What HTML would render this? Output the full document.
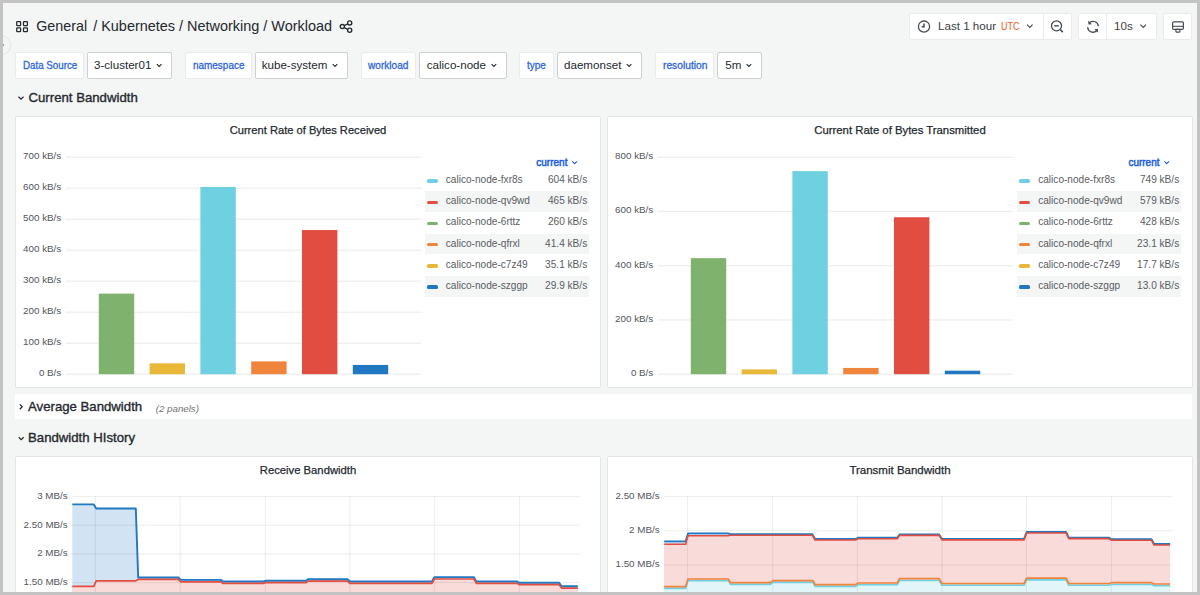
<!DOCTYPE html>
<html><head><meta charset="utf-8"><style>
*{box-sizing:border-box;margin:0;padding:0}
html,body{width:1200px;height:595px;overflow:hidden;background:#f4f5f5}
body{font-family:"Liberation Sans",sans-serif;color:#24292e;position:relative}
.a{position:absolute;white-space:nowrap;line-height:1}
.lbl{color:#2d66e0;-webkit-text-stroke:0.3px #2d66e0}
.val{color:#24292e}
.ptitle{color:#24292e;-webkit-text-stroke:0.25px #24292e}
.rtitle{color:#24292e;-webkit-text-stroke:0.35px #24292e}
.ax{color:#52565c}
.lg{color:#595d63}
svg{position:absolute;overflow:visible}
#frame{position:absolute;left:0;top:0;width:1200px;height:595px;border:3px solid #c3c3c3;z-index:50}
</style></head><body>
<svg style="left:0;top:0" width="1200" height="60" viewBox="0 0 1200 60"><g fill="none" stroke="#24292e" stroke-width="1.25"><rect x="16.7" y="21.6" width="3.9" height="3.9" rx="0.6"/><rect x="23.5" y="21.6" width="3.9" height="3.9" rx="0.6"/><rect x="16.7" y="27.8" width="3.9" height="3.9" rx="0.6"/><rect x="23.5" y="27.8" width="3.9" height="3.9" rx="0.6"/></g><g fill="none" stroke="#24292e" stroke-width="1.3"><circle cx="349.7" cy="22.9" r="2.1"/><circle cx="342.3" cy="26.6" r="2.1"/><circle cx="349.7" cy="30.3" r="2.1"/><line x1="344.2" y1="25.6" x2="347.8" y2="23.9"/><line x1="344.2" y1="27.6" x2="347.8" y2="29.3"/></g></svg>
<div class="a val" style="left:36.25px;top:19.00px;font-size:14.3px;">General</div>
<div class="a val" style="left:93.20px;top:19.00px;font-size:14.45px;">/ Kubernetes / Networking / Workload</div>
<div style="position:absolute;left:909px;top:13px;width:163px;height:27px;background:#fff;border:1px solid #e9ebee;border-radius:2px"></div>
<div style="position:absolute;left:1043px;top:14px;width:1px;height:25px;background:#e9ebee"></div>
<div style="position:absolute;left:1078px;top:13px;width:79px;height:27px;background:#fff;border:1px solid #e9ebee;border-radius:2px"></div>
<div style="position:absolute;left:1106px;top:14px;width:1px;height:25px;background:#e9ebee"></div>
<div style="position:absolute;left:1163px;top:13px;width:29px;height:27px;background:#fff;border:1px solid #e9ebee;border-radius:2px"></div>
<div class="a " style="left:938.00px;top:20.00px;font-size:11.6px;color:#3b4046">Last 1 hour</div>
<div class="a " style="left:1001.00px;top:22.00px;font-size:10px;color:#e8692c;-webkit-text-stroke:0.1px #e8692c;transform:scaleX(0.9);transform-origin:0 0">UTC</div>
<div class="a " style="left:1114.00px;top:20.00px;font-size:11.6px;color:#3b4046">10s</div>
<svg style="left:0;top:0" width="1200" height="60" viewBox="0 0 1200 60"><g fill="none" stroke="#464c54" stroke-width="1.3"><circle cx="924" cy="26.6" r="5.6"/><polyline points="924,23.4 924,26.7 921.7,26.7" stroke-width="1.5"/></g><polyline points="1027.00,24.60 1029.80,27.40 1032.60,24.60" fill="none" stroke="#464c54" stroke-width="1.15"/><g fill="none" stroke="#464c54" stroke-width="1.3"><circle cx="1056.5" cy="25.8" r="5.0"/><line x1="1054.2" y1="25.8" x2="1058.8" y2="25.8" stroke-width="1.4"/><line x1="1060.3" y1="29.6" x2="1062.8" y2="32.1" stroke-width="1.5"/></g><g fill="none" stroke="#464c54" stroke-width="1.3"><path d="M1089.6,22.6 A5.4,5.4 0 0 1 1098.4,26.2"/><path d="M1096.6,30.8 A5.4,5.4 0 0 1 1087.6,27.2"/></g><path d="M1088.2,20.6 L1088.4,24.6 L1091.9,24.2 Z" fill="#464c54"/><path d="M1098,32.8 L1097.8,28.8 L1094.3,29.2 Z" fill="#464c54"/><polyline points="1140.40,24.60 1143.20,27.40 1146.00,24.60" fill="none" stroke="#464c54" stroke-width="1.15"/><g fill="none" stroke="#464c54" stroke-width="1.2"><rect x="1172.6" y="21.8" width="10.8" height="7.6" rx="1.2"/><line x1="1172.6" y1="26.3" x2="1183.4" y2="26.3" stroke-width="1.1"/><rect x="1175.9" y="29.4" width="4.0" height="2.7" rx="0.5"/></g><circle cx="1" cy="45.2" r="9.6" fill="#f4f5f5" stroke="#dcdee0" stroke-width="0.8"/><circle cx="3.4" cy="45.1" r="0.75" fill="#6a6e73"/></svg>
<div style="position:absolute;left:15px;top:52px;width:69px;height:27px;background:#fff;border:1px solid #e9ebee;border-radius:2px"></div>
<div style="position:absolute;left:87px;top:52px;width:85px;height:27px;background:#fff;border:1px solid #cdd0d4;border-radius:2px"></div>
<div class="a lbl" style="left:22.50px;top:61.00px;font-size:10.4px;transform:scaleX(0.938);transform-origin:0 0">Data Source</div>
<div class="a val" style="left:94.00px;top:59.00px;font-size:11.6px;">3-cluster01</div>
<div style="position:absolute;left:185px;top:52px;width:67px;height:27px;background:#fff;border:1px solid #e9ebee;border-radius:2px"></div>
<div style="position:absolute;left:255px;top:52px;width:93px;height:27px;background:#fff;border:1px solid #cdd0d4;border-radius:2px"></div>
<div class="a lbl" style="left:192.70px;top:61.00px;font-size:10.4px;transform:scaleX(0.957);transform-origin:0 0">namespace</div>
<div class="a val" style="left:261.70px;top:59.00px;font-size:11.6px;">kube-system</div>
<div style="position:absolute;left:361px;top:52px;width:55px;height:27px;background:#fff;border:1px solid #e9ebee;border-radius:2px"></div>
<div style="position:absolute;left:419px;top:52px;width:88px;height:27px;background:#fff;border:1px solid #cdd0d4;border-radius:2px"></div>
<div class="a lbl" style="left:368.20px;top:61.00px;font-size:10.4px;transform:scaleX(0.971);transform-origin:0 0">workload</div>
<div class="a val" style="left:426.70px;top:59.00px;font-size:11.6px;">calico-node</div>
<div style="position:absolute;left:519px;top:52px;width:35px;height:27px;background:#fff;border:1px solid #e9ebee;border-radius:2px"></div>
<div style="position:absolute;left:557px;top:52px;width:85px;height:27px;background:#fff;border:1px solid #cdd0d4;border-radius:2px"></div>
<div class="a lbl" style="left:527.20px;top:61.00px;font-size:10.4px;transform:scaleX(0.957);transform-origin:0 0">type</div>
<div class="a val" style="left:564.00px;top:59.00px;font-size:11.6px;">daemonset</div>
<div style="position:absolute;left:655px;top:52px;width:59px;height:27px;background:#fff;border:1px solid #e9ebee;border-radius:2px"></div>
<div style="position:absolute;left:717px;top:52px;width:45px;height:27px;background:#fff;border:1px solid #cdd0d4;border-radius:2px"></div>
<div class="a lbl" style="left:662.50px;top:61.00px;font-size:10.4px;transform:scaleX(0.986);transform-origin:0 0">resolution</div>
<div class="a val" style="left:725.20px;top:59.00px;font-size:11.6px;">5m</div>
<svg style="left:0;top:0" width="1200" height="100" viewBox="0 0 1200 100"><polyline points="156.90,64.05 159.20,66.35 161.50,64.05" fill="none" stroke="#24292e" stroke-width="1.1"/><polyline points="332.70,64.05 335.00,66.35 337.30,64.05" fill="none" stroke="#24292e" stroke-width="1.1"/><polyline points="491.60,64.05 493.90,66.35 496.20,64.05" fill="none" stroke="#24292e" stroke-width="1.1"/><polyline points="626.80,64.05 629.10,66.35 631.40,64.05" fill="none" stroke="#24292e" stroke-width="1.1"/><polyline points="746.60,64.05 748.90,66.35 751.20,64.05" fill="none" stroke="#24292e" stroke-width="1.1"/><polyline points="18.50,96.75 21.00,99.25 23.50,96.75" fill="none" stroke="#24292e" stroke-width="1.2"/></svg>
<div class="a rtitle" style="left:28.50px;top:91.00px;font-size:13.2px;">Current Bandwidth</div>
<div style="position:absolute;left:15px;top:394px;width:1177px;height:25px;background:#fff"></div>
<svg style="left:0;top:380" width="40" height="80" viewBox="0 380 40 80"><polyline points="19.8,404.4 22.2,406.8 19.8,409.2" fill="none" stroke="#24292e" stroke-width="1.25"/><polyline points="18.70,437.25 21.20,439.75 23.70,437.25" fill="none" stroke="#24292e" stroke-width="1.2"/></svg>
<div class="a rtitle" style="left:28.00px;top:400.00px;font-size:13.2px;">Average Bandwidth</div>
<div class="a " style="left:155.80px;top:404.00px;font-size:9.7px;font-style:italic;color:#6e7175">(2 panels)</div>
<div class="a rtitle" style="left:28.00px;top:431.00px;font-size:13.2px;">Bandwidth HIstory</div>
<div style="position:absolute;left:15px;top:116px;width:586px;height:272px;background:#fff;border:1px solid #e3e5e8;border-radius:2px"></div>
<div style="position:absolute;left:607px;top:116px;width:586px;height:272px;background:#fff;border:1px solid #e3e5e8;border-radius:2px"></div>
<div style="position:absolute;left:15px;top:456px;width:586px;height:200px;background:#fff;border:1px solid #e3e5e8;border-radius:2px"></div>
<div style="position:absolute;left:607px;top:456px;width:586px;height:200px;background:#fff;border:1px solid #e3e5e8;border-radius:2px"></div>
<div class="a ptitle" style="left:8.00px;width:600px;text-align:center;top:125.00px;font-size:11.15px;">Current Rate of Bytes Received</div>
<div class="a ptitle" style="left:600.00px;width:600px;text-align:center;top:125.00px;font-size:11.35px;">Current Rate of Bytes Transmitted</div>
<div class="a ptitle" style="left:8.00px;width:600px;text-align:center;top:465.00px;font-size:11.25px;">Receive Bandwidth</div>
<div class="a ptitle" style="left:600.00px;width:600px;text-align:center;top:465.00px;font-size:11.5px;">Transmit Bandwidth</div>
<svg style="left:0;top:0" width="1200" height="400" viewBox="0 0 1200 400"><rect x="66" y="373.60" width="355" height="1.2" fill="#ededed"/><rect x="66" y="342.60" width="355" height="1.2" fill="#ededed"/><rect x="66" y="311.60" width="355" height="1.2" fill="#ededed"/><rect x="66" y="280.60" width="355" height="1.2" fill="#ededed"/><rect x="66" y="249.60" width="355" height="1.2" fill="#ededed"/><rect x="66" y="218.60" width="355" height="1.2" fill="#ededed"/><rect x="66" y="187.60" width="355" height="1.2" fill="#ededed"/><rect x="66" y="156.60" width="355" height="1.2" fill="#ededed"/><rect x="98.80" y="293.60" width="35.4" height="80.60" fill="#7eb26d"/><rect x="149.60" y="363.32" width="35.4" height="10.88" fill="#eab839"/><rect x="200.40" y="186.96" width="35.4" height="187.24" fill="#6ed0e0"/><rect x="251.20" y="361.37" width="35.4" height="12.83" fill="#ef843c"/><rect x="302.00" y="230.05" width="35.4" height="144.15" fill="#e24d42"/><rect x="352.80" y="364.93" width="35.4" height="9.27" fill="#1f78c1"/></svg>
<div class="a ax" style="right:1138.80px;top:368.00px;font-size:9.8px;">0 B/s</div>
<div class="a ax" style="right:1138.80px;top:337.00px;font-size:9.8px;">100 kB/s</div>
<div class="a ax" style="right:1138.80px;top:306.00px;font-size:9.8px;">200 kB/s</div>
<div class="a ax" style="right:1138.80px;top:275.00px;font-size:9.8px;">300 kB/s</div>
<div class="a ax" style="right:1138.80px;top:244.00px;font-size:9.8px;">400 kB/s</div>
<div class="a ax" style="right:1138.80px;top:213.00px;font-size:9.8px;">500 kB/s</div>
<div class="a ax" style="right:1138.80px;top:182.00px;font-size:9.8px;">600 kB/s</div>
<div class="a ax" style="right:1138.80px;top:151.00px;font-size:9.8px;">700 kB/s</div>
<svg style="left:0;top:0" width="1200" height="400" viewBox="0 0 1200 400"><rect x="658" y="373.60" width="355" height="1.2" fill="#ededed"/><rect x="658" y="319.37" width="355" height="1.2" fill="#ededed"/><rect x="658" y="265.15" width="355" height="1.2" fill="#ededed"/><rect x="658" y="210.92" width="355" height="1.2" fill="#ededed"/><rect x="658" y="156.70" width="355" height="1.2" fill="#ededed"/><rect x="690.80" y="258.16" width="35.4" height="116.04" fill="#7eb26d"/><rect x="741.60" y="369.40" width="35.4" height="4.80" fill="#eab839"/><rect x="792.40" y="171.13" width="35.4" height="203.07" fill="#6ed0e0"/><rect x="843.20" y="367.94" width="35.4" height="6.26" fill="#ef843c"/><rect x="894.00" y="217.22" width="35.4" height="156.98" fill="#e24d42"/><rect x="944.80" y="370.68" width="35.4" height="3.52" fill="#1f78c1"/></svg>
<div class="a ax" style="right:546.80px;top:368.00px;font-size:9.8px;">0 B/s</div>
<div class="a ax" style="right:546.80px;top:314.00px;font-size:9.8px;">200 kB/s</div>
<div class="a ax" style="right:546.80px;top:260.00px;font-size:9.8px;">400 kB/s</div>
<div class="a ax" style="right:546.80px;top:205.00px;font-size:9.8px;">600 kB/s</div>
<div class="a ax" style="right:546.80px;top:151.00px;font-size:9.8px;">800 kB/s</div>
<div style="position:absolute;left:426.6px;top:179.35px;width:11.4px;height:3.5px;background:#6ed0e0;border-radius:1.5px"></div>
<div class="a lg" style="left:445.80px;top:175.00px;font-size:10.1px;">calico-node-fxr8s</div>
<div class="a lg" style="right:612.80px;top:175.00px;font-size:10.1px;">604 kB/s</div>
<div style="position:absolute;left:425px;top:191.3px;width:164px;height:20.8px;background:#f4f5f5"></div>
<div style="position:absolute;left:426.6px;top:200.55px;width:11.4px;height:3.5px;background:#e24d42;border-radius:1.5px"></div>
<div class="a lg" style="left:445.80px;top:196.00px;font-size:10.1px;">calico-node-qv9wd</div>
<div class="a lg" style="right:612.80px;top:196.00px;font-size:10.1px;">465 kB/s</div>
<div style="position:absolute;left:426.6px;top:221.75px;width:11.4px;height:3.5px;background:#7eb26d;border-radius:1.5px"></div>
<div class="a lg" style="left:445.80px;top:217.00px;font-size:10.1px;">calico-node-6rttz</div>
<div class="a lg" style="right:612.80px;top:217.00px;font-size:10.1px;">260 kB/s</div>
<div style="position:absolute;left:425px;top:233.7px;width:164px;height:20.8px;background:#f4f5f5"></div>
<div style="position:absolute;left:426.6px;top:242.95px;width:11.4px;height:3.5px;background:#ef843c;border-radius:1.5px"></div>
<div class="a lg" style="left:445.80px;top:239.00px;font-size:10.1px;">calico-node-qfrxl</div>
<div class="a lg" style="right:612.80px;top:239.00px;font-size:10.1px;">41.4 kB/s</div>
<div style="position:absolute;left:426.6px;top:264.15px;width:11.4px;height:3.5px;background:#eab839;border-radius:1.5px"></div>
<div class="a lg" style="left:445.80px;top:260.00px;font-size:10.1px;">calico-node-c7z49</div>
<div class="a lg" style="right:612.80px;top:260.00px;font-size:10.1px;">35.1 kB/s</div>
<div style="position:absolute;left:425px;top:276.1px;width:164px;height:20.8px;background:#f4f5f5"></div>
<div style="position:absolute;left:426.6px;top:285.35px;width:11.4px;height:3.5px;background:#1f78c1;border-radius:1.5px"></div>
<div class="a lg" style="left:445.80px;top:281.00px;font-size:10.1px;">calico-node-szggp</div>
<div class="a lg" style="right:612.80px;top:281.00px;font-size:10.1px;">29.9 kB/s</div>
<div class="a " style="left:536.30px;top:158.00px;font-size:10px;color:#1f62e0;-webkit-text-stroke:0.5px #1f62e0">current</div>
<svg style="left:0;top:0" width="1200" height="200" viewBox="0 0 1200 200"><polyline points="572.30,161.45 574.60,163.75 576.90,161.45" fill="none" stroke="#1f62e0" stroke-width="1.1"/></svg>
<div style="position:absolute;left:1018.7px;top:179.35px;width:11.4px;height:3.5px;background:#6ed0e0;border-radius:1.5px"></div>
<div class="a lg" style="left:1038.20px;top:175.00px;font-size:10.1px;">calico-node-fxr8s</div>
<div class="a lg" style="right:20.80px;top:175.00px;font-size:10.1px;">749 kB/s</div>
<div style="position:absolute;left:1017px;top:191.3px;width:164px;height:20.8px;background:#f4f5f5"></div>
<div style="position:absolute;left:1018.7px;top:200.55px;width:11.4px;height:3.5px;background:#e24d42;border-radius:1.5px"></div>
<div class="a lg" style="left:1038.20px;top:196.00px;font-size:10.1px;">calico-node-qv9wd</div>
<div class="a lg" style="right:20.80px;top:196.00px;font-size:10.1px;">579 kB/s</div>
<div style="position:absolute;left:1018.7px;top:221.75px;width:11.4px;height:3.5px;background:#7eb26d;border-radius:1.5px"></div>
<div class="a lg" style="left:1038.20px;top:217.00px;font-size:10.1px;">calico-node-6rttz</div>
<div class="a lg" style="right:20.80px;top:217.00px;font-size:10.1px;">428 kB/s</div>
<div style="position:absolute;left:1017px;top:233.7px;width:164px;height:20.8px;background:#f4f5f5"></div>
<div style="position:absolute;left:1018.7px;top:242.95px;width:11.4px;height:3.5px;background:#ef843c;border-radius:1.5px"></div>
<div class="a lg" style="left:1038.20px;top:239.00px;font-size:10.1px;">calico-node-qfrxl</div>
<div class="a lg" style="right:20.80px;top:239.00px;font-size:10.1px;">23.1 kB/s</div>
<div style="position:absolute;left:1018.7px;top:264.15px;width:11.4px;height:3.5px;background:#eab839;border-radius:1.5px"></div>
<div class="a lg" style="left:1038.20px;top:260.00px;font-size:10.1px;">calico-node-c7z49</div>
<div class="a lg" style="right:20.80px;top:260.00px;font-size:10.1px;">17.7 kB/s</div>
<div style="position:absolute;left:1017px;top:276.1px;width:164px;height:20.8px;background:#f4f5f5"></div>
<div style="position:absolute;left:1018.7px;top:285.35px;width:11.4px;height:3.5px;background:#1f78c1;border-radius:1.5px"></div>
<div class="a lg" style="left:1038.20px;top:281.00px;font-size:10.1px;">calico-node-szggp</div>
<div class="a lg" style="right:20.80px;top:281.00px;font-size:10.1px;">13.0 kB/s</div>
<div class="a " style="left:1128.40px;top:158.00px;font-size:10px;color:#1f62e0;-webkit-text-stroke:0.5px #1f62e0">current</div>
<svg style="left:0;top:0" width="1200" height="200" viewBox="0 0 1200 200"><polyline points="1164.40,161.45 1166.70,163.75 1169.00,161.45" fill="none" stroke="#1f62e0" stroke-width="1.1"/></svg>
<svg style="left:0;top:0" width="1200" height="600" viewBox="0 0 1200 600"><defs><clipPath id="c72"><rect x="0" y="0" width="1200" height="592"/></clipPath></defs><g clip-path="url(#c72)"><polygon points="72.30,504.40 93.80,504.40 96.20,508.50 135.80,508.50 138.20,577.50 178.50,577.50 180.60,579.90 221.00,579.90 222.90,581.50 263.50,581.50 265.30,580.80 306.20,580.80 307.80,579.20 347.50,579.20 349.90,581.50 432.00,581.50 434.30,577.10 474.00,577.10 476.30,581.50 517.20,581.50 519.00,582.70 559.20,582.70 561.50,586.20 577.80,586.20 577.80,600.00 72.30,600.00" fill="#d2e3f3"/><polygon points="72.30,586.40 93.80,586.40 96.20,580.80 135.80,580.80 138.20,579.40 178.50,579.40 180.60,581.80 221.00,581.80 222.90,583.40 263.50,583.40 265.30,582.70 306.20,582.70 307.80,581.10 347.50,581.10 349.90,583.40 432.00,583.40 434.30,579.00 474.00,579.00 476.30,583.40 517.20,583.40 519.00,584.60 559.20,584.60 561.50,588.10 577.80,588.10 577.80,600.00 72.30,600.00" fill="#f9dbd9"/><rect x="72.3" y="495.90" width="507.90000000000003" height="1.2" fill="rgba(0,0,0,0.062)"/><rect x="72.3" y="524.60" width="507.90000000000003" height="1.2" fill="rgba(0,0,0,0.062)"/><rect x="72.3" y="553.30" width="507.90000000000003" height="1.2" fill="rgba(0,0,0,0.062)"/><rect x="72.3" y="582.00" width="507.90000000000003" height="1.2" fill="rgba(0,0,0,0.062)"/><rect x="94.80" y="495.90" width="1.2" height="120" fill="rgba(0,0,0,0.062)"/><rect x="179.60" y="495.90" width="1.2" height="120" fill="rgba(0,0,0,0.062)"/><rect x="264.70" y="495.90" width="1.2" height="120" fill="rgba(0,0,0,0.062)"/><rect x="349.30" y="495.90" width="1.2" height="120" fill="rgba(0,0,0,0.062)"/><rect x="433.70" y="495.90" width="1.2" height="120" fill="rgba(0,0,0,0.062)"/><rect x="518.90" y="495.90" width="1.2" height="120" fill="rgba(0,0,0,0.062)"/><polyline points="72.30,504.40 93.80,504.40 96.20,508.50 135.80,508.50 138.20,577.50 178.50,577.50 180.60,579.90 221.00,579.90 222.90,581.50 263.50,581.50 265.30,580.80 306.20,580.80 307.80,579.20 347.50,579.20 349.90,581.50 432.00,581.50 434.30,577.10 474.00,577.10 476.30,581.50 517.20,581.50 519.00,582.70 559.20,582.70 561.50,586.20 577.80,586.20" fill="none" stroke="#1f78c1" stroke-width="1.9" stroke-linejoin="round"/><polyline points="72.30,586.40 93.80,586.40 96.20,580.80 135.80,580.80 138.20,579.40 178.50,579.40 180.60,581.80 221.00,581.80 222.90,583.40 263.50,583.40 265.30,582.70 306.20,582.70 307.80,581.10 347.50,581.10 349.90,583.40 432.00,583.40 434.30,579.00 474.00,579.00 476.30,583.40 517.20,583.40 519.00,584.60 559.20,584.60 561.50,588.10 577.80,588.10" fill="none" stroke="#e24d42" stroke-width="1.7" stroke-linejoin="round"/></g></svg>
<div class="a ax" style="right:1132.30px;top:491.00px;font-size:9.8px;">3 MB/s</div>
<div class="a ax" style="right:1132.30px;top:520.00px;font-size:9.8px;">2.50 MB/s</div>
<div class="a ax" style="right:1132.30px;top:548.00px;font-size:9.8px;">2 MB/s</div>
<div class="a ax" style="right:1132.30px;top:577.00px;font-size:9.8px;">1.50 MB/s</div>
<svg style="left:0;top:0" width="1200" height="600" viewBox="0 0 1200 600"><defs><clipPath id="c664"><rect x="0" y="0" width="1200" height="592"/></clipPath></defs><g clip-path="url(#c664)"><polygon points="664.20,541.40 685.60,541.40 688.00,533.40 728.00,533.40 730.00,534.20 812.40,534.20 815.00,539.00 855.60,539.00 858.00,537.80 897.30,537.80 899.50,534.40 939.20,534.40 941.90,538.90 1024.00,538.90 1026.70,532.00 1066.10,532.00 1068.80,537.60 1108.80,537.60 1111.50,539.20 1151.50,539.20 1154.10,544.00 1170.10,544.00 1170.10,600.00 664.20,600.00" fill="#d2e3f3"/><polygon points="664.20,544.20 685.60,544.20 688.00,535.80 728.00,535.80 730.00,535.20 812.40,535.20 815.00,540.00 855.60,540.00 858.00,538.80 897.30,538.80 899.50,535.40 939.20,535.40 941.90,539.90 1024.00,539.90 1026.70,533.00 1066.10,533.00 1068.80,538.60 1108.80,538.60 1111.50,540.20 1151.50,540.20 1154.10,545.00 1170.10,545.00 1170.10,600.00 664.20,600.00" fill="#f9dbd9"/><polygon points="664.20,588.40 685.60,588.40 688.00,580.80 728.40,580.80 730.40,584.40 770.40,584.40 773.00,582.40 813.00,582.40 815.00,586.40 855.60,586.40 858.00,584.80 897.30,584.80 899.50,580.50 939.20,580.50 941.90,585.30 1024.00,585.30 1026.70,579.90 1066.10,579.90 1068.80,585.30 1108.80,585.30 1111.50,584.50 1151.50,584.50 1154.10,585.80 1170.10,585.80 1170.10,600.00 664.20,600.00" fill="#e2f6f9"/><rect x="664.2" y="495.90" width="507.79999999999995" height="1.2" fill="rgba(0,0,0,0.062)"/><rect x="664.2" y="530.10" width="507.79999999999995" height="1.2" fill="rgba(0,0,0,0.062)"/><rect x="664.2" y="564.40" width="507.79999999999995" height="1.2" fill="rgba(0,0,0,0.062)"/><rect x="686.90" y="495.90" width="1.2" height="120" fill="rgba(0,0,0,0.062)"/><rect x="772.10" y="495.90" width="1.2" height="120" fill="rgba(0,0,0,0.062)"/><rect x="856.80" y="495.90" width="1.2" height="120" fill="rgba(0,0,0,0.062)"/><rect x="941.50" y="495.90" width="1.2" height="120" fill="rgba(0,0,0,0.062)"/><rect x="1025.80" y="495.90" width="1.2" height="120" fill="rgba(0,0,0,0.062)"/><rect x="1110.90" y="495.90" width="1.2" height="120" fill="rgba(0,0,0,0.062)"/><polyline points="664.20,541.40 685.60,541.40 688.00,533.40 728.00,533.40 730.00,534.20 812.40,534.20 815.00,539.00 855.60,539.00 858.00,537.80 897.30,537.80 899.50,534.40 939.20,534.40 941.90,538.90 1024.00,538.90 1026.70,532.00 1066.10,532.00 1068.80,537.60 1108.80,537.60 1111.50,539.20 1151.50,539.20 1154.10,544.00 1170.10,544.00" fill="none" stroke="#1f78c1" stroke-width="1.9" stroke-linejoin="round"/><polyline points="664.20,544.20 685.60,544.20 688.00,535.80 728.00,535.80 730.00,535.20 812.40,535.20 815.00,540.00 855.60,540.00 858.00,538.80 897.30,538.80 899.50,535.40 939.20,535.40 941.90,539.90 1024.00,539.90 1026.70,533.00 1066.10,533.00 1068.80,538.60 1108.80,538.60 1111.50,540.20 1151.50,540.20 1154.10,545.00 1170.10,545.00" fill="none" stroke="#e24d42" stroke-width="1.6" stroke-linejoin="round"/><polyline points="664.20,588.40 685.60,588.40 688.00,580.80 728.40,580.80 730.40,584.40 770.40,584.40 773.00,582.40 813.00,582.40 815.00,586.40 855.60,586.40 858.00,584.80 897.30,584.80 899.50,580.50 939.20,580.50 941.90,585.30 1024.00,585.30 1026.70,579.90 1066.10,579.90 1068.80,585.30 1108.80,585.30 1111.50,584.50 1151.50,584.50 1154.10,585.80 1170.10,585.80" fill="none" stroke="#6ed0e0" stroke-width="1.6" stroke-linejoin="round"/><polyline points="664.20,586.60 685.60,586.60 688.00,579.00 728.40,579.00 730.40,582.60 770.40,582.60 773.00,580.60 813.00,580.60 815.00,584.60 855.60,584.60 858.00,583.00 897.30,583.00 899.50,578.70 939.20,578.70 941.90,583.50 1024.00,583.50 1026.70,578.10 1066.10,578.10 1068.80,583.50 1108.80,583.50 1111.50,582.70 1151.50,582.70 1154.10,584.00 1170.10,584.00" fill="none" stroke="#ef843c" stroke-width="1.7" stroke-linejoin="round"/></g></svg>
<div class="a ax" style="right:540.40px;top:491.00px;font-size:9.8px;">2.50 MB/s</div>
<div class="a ax" style="right:540.40px;top:525.00px;font-size:9.8px;">2 MB/s</div>
<div class="a ax" style="right:540.40px;top:559.00px;font-size:9.8px;">1.50 MB/s</div>
<div id="frame"></div>
</body></html>
